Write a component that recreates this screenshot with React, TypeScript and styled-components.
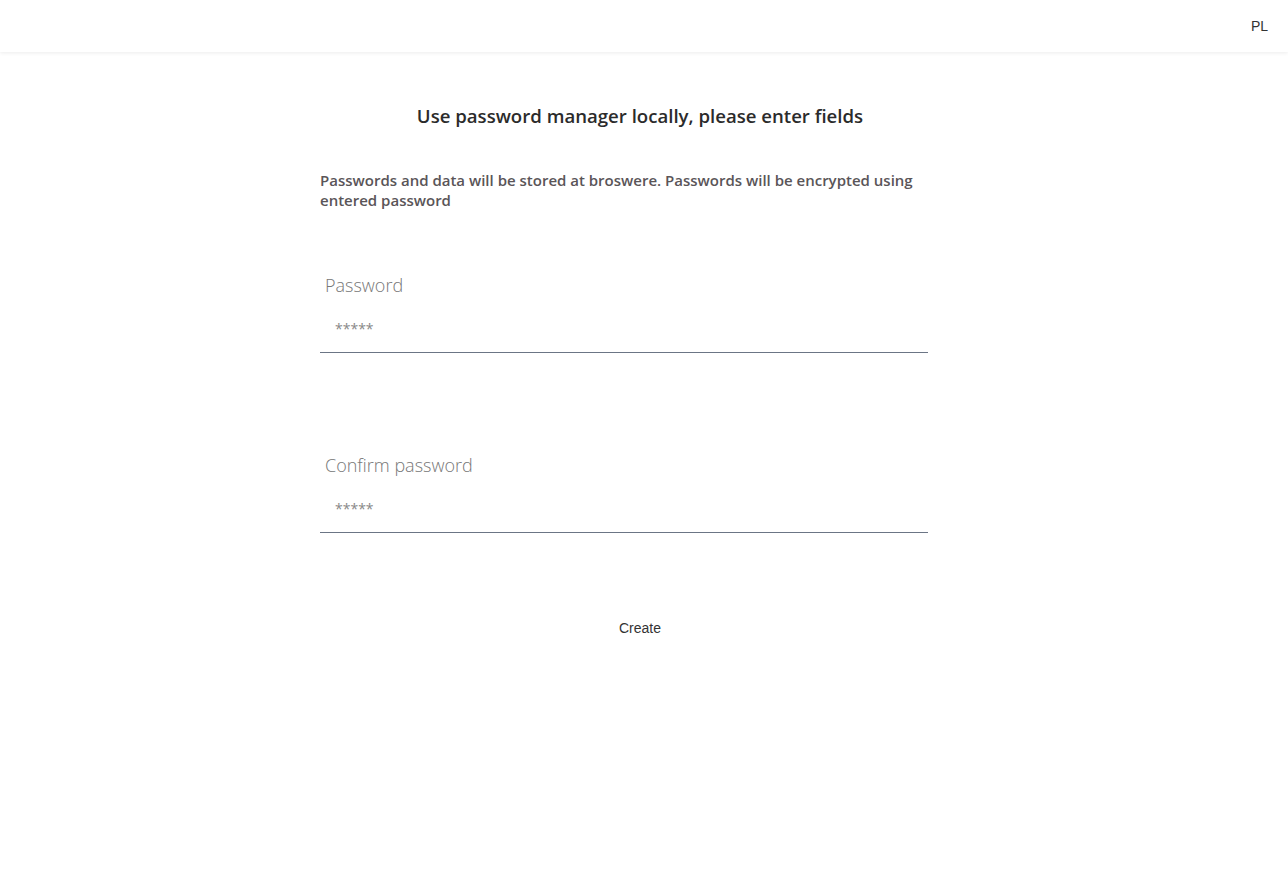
import styled, { createGlobalStyle } from "styled-components";

const GlobalStyle = createGlobalStyle`
  html, body {
    margin: 0;
    padding: 0;
    background: #ffffff;
    font-family: "Open Sans", "Noto Sans", sans-serif;
  }
  * {
    box-sizing: border-box;
  }
`;

const fields = [
  { id: "password", label: "Password" },
  { id: "confirm", label: "Confirm password" },
];

const App = () => {
  return (
    <Page>
      <GlobalStyle />
      <Header>
        <LangSwitch>PL</LangSwitch>
      </Header>
      <Main>
        <Form>
          <Title>Use password manager locally, please enter fields</Title>
          <Description>
            Passwords and data will be stored at broswere. Passwords will be
            encrypted using entered password
          </Description>
          {fields.map((f) => (
            <Field key={f.id}>
              <Label htmlFor={f.id}>{f.label}</Label>
              <Input id={f.id} type="password" placeholder="*****" />
            </Field>
          ))}
          <CreateButton type="button">Create</CreateButton>
        </Form>
      </Main>
    </Page>
  );
};

const Page = styled.div`
  width: 100%;
  min-height: 100vh;
  background: #ffffff;
`;

const Header = styled.header`
  height: 52px;
  display: flex;
  align-items: center;
  justify-content: flex-end;
  padding: 0 20px;
  box-shadow: 0 1px 4px rgba(0, 0, 0, 0.08);
`;

const LangSwitch = styled.span`
  font-family: "Liberation Sans", Arial, sans-serif;
  font-size: 14px;
  color: #333333;
  cursor: pointer;
`;

const Main = styled.main`
  display: flex;
  justify-content: center;
  padding-right: 8px;
`;

const Form = styled.form`
  width: 640px;
  display: flex;
  flex-direction: column;
  align-items: flex-start;
  padding-top: 51px;
`;

const Title = styled.h1`
  align-self: center;
  margin: 0;
  font-size: 18.6px;
  font-weight: 600;
  line-height: 26px;
  color: #2b2b2b;
`;

const Description = styled.p`
  width: 95%;
  margin: 41px 0 0;
  font-size: 15px;
  font-weight: 600;
  line-height: 20px;
  color: #5a5558;
`;

const Field = styled.div`
  width: 95%;
  display: flex;
  flex-direction: column;
  margin-top: 63px;

  & + & {
    margin-top: 100px;
  }
`;

const Label = styled.label`
  padding-left: 5px;
  font-size: 18px;
  font-weight: 300;
  line-height: 24px;
  color: #777777;
`;

const Input = styled.input`
  width: 100%;
  margin-top: 22px;
  padding: 0 15px 13px;
  border: none;
  border-bottom: 1px solid #6b7585;
  outline: none;
  font-family: inherit;
  font-size: 14px;
  line-height: 20px;
  color: #333333;
  background: transparent;

  &::placeholder {
    color: #888888;
  }
`;

const CreateButton = styled.button`
  align-self: center;
  margin-top: 85px;
  padding: 0;
  border: none;
  background: none;
  font-family: "Liberation Sans", Arial, sans-serif;
  font-size: 14px;
  line-height: 20px;
  color: #333333;
  cursor: pointer;
`;

export default App;
